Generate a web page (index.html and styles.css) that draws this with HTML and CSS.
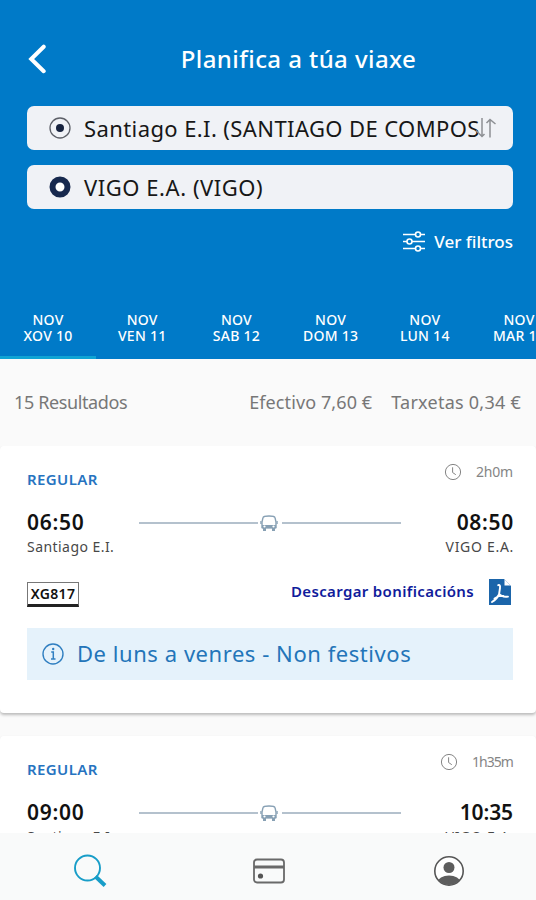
FILE: index.html
```html
<!DOCTYPE html>
<html lang="gl">
<head>
<meta charset="utf-8">
<meta name="viewport" content="width=device-width">
<title>Planifica a túa viaxe</title>
<link rel="stylesheet" href="styles.css">
</head>
<body>
<svg class="defs" width="0" height="0" aria-hidden="true">
  <symbol id="bus" viewBox="0 0 18 18">
    <path d="M3 3.7Q3.3 2 9 2T15 3.7L16 8V13.5H2V8Z" fill="#fff" stroke="currentColor" stroke-width="1.4"/>
    <path d="M2 11H16V14.5H2ZM3 14H6V17H3ZM12 14H15V17H12ZM.3 7H1.5V10H.3ZM16.5 7H17.7V10H16.5Z" fill="currentColor"/>
    <circle cx="4.5" cy="12.5" r="1.1" fill="#fff"/><circle cx="13.5" cy="12.5" r="1.1" fill="#fff"/>
  </symbol>
  <symbol id="clock" viewBox="0 0 18 18">
    <circle cx="9" cy="9" r="7.6" fill="none" stroke="currentColor"/>
    <path d="M8.6 4.3V9.5L11.8 11.7" fill="none" stroke="currentColor"/>
  </symbol>
</svg>
<div class="app">
  <header class="top">
    <div class="title-row">
      <svg class="back" width="18" height="30" viewBox="0 0 18 30"><path d="M15.7 2.7L3.2 15L15.7 27.2" fill="none" stroke="#fff" stroke-width="4" stroke-linecap="round" stroke-linejoin="miter"/></svg>
      <h1><span class="t-title">Planifica a túa viaxe</span></h1>
    </div>
    <div class="field">
      <svg width="24" height="24" viewBox="0 0 24 24"><circle cx="12" cy="12" r="10" fill="none" stroke="#5d6068" stroke-width="1.3"/><circle cx="12" cy="12" r="4" fill="#17233f"/></svg>
      <span class="t-from">Santiago E.I. (SANTIAGO DE COMPOS</span>
      <svg class="swap" width="22" height="20" viewBox="0 0 22 20"><path d="M7 0V18.5M1 12.5L7 18.5L9.5 16M15 19.5V1.5M11.5 5L15 1.5L20.5 6" fill="none" stroke="#8d9094" stroke-width="1.5"/></svg>
    </div>
    <div class="field">
      <svg width="24" height="24" viewBox="0 0 24 24"><circle cx="12" cy="12" r="7.5" fill="#fff" stroke="#17294e" stroke-width="6"/></svg>
      <span class="t-to">VIGO E.A. (VIGO)</span>
    </div>
    <div class="filters">
      <svg width="22" height="21" viewBox="0 0 22 21"><g fill="#007ac8" stroke="#fff" stroke-width="1.6"><path d="M0 3.5H22M0 10.5H22M0 17.5H22"/><circle cx="15" cy="3.5" r="2.5"/><circle cx="6.5" cy="10.5" r="2.5"/><circle cx="15" cy="17.5" r="2.5"/></g></svg>
      <span class="t-filter">Ver filtros</span>
    </div>
    <nav class="days">
      <div class="day active">NOV<br>XOV 10</div>
      <div class="day">NOV<br>VEN 11</div>
      <div class="day">NOV<br>SAB 12</div>
      <div class="day">NOV<br>DOM 13</div>
      <div class="day">NOV<br>LUN 14</div>
      <div class="day">NOV<br>MAR 15</div>
    </nav>
  </header>
  <div class="summary"><span class="t-count">15 Resultados</span><span class="prices"><span class="t-cash">Efectivo 7,60 €</span><span class="t-card">Tarxetas 0,34 €</span></span></div>
  <main class="list">
    <article class="card">
      <div class="card-head"><span class="kind">REGULAR</span><span class="duration"><svg width="18" height="18"><use href="#clock"/></svg><span class="t-dur">2h0m</span></span></div>
      <div class="trip">
        <b>06:50</b>
        <div class="route"><i></i><svg width="18" height="18"><use href="#bus"/></svg><i></i></div>
        <b class="end">08:50</b>
      </div>
      <div class="stops"><span class="t-stop">Santiago E.I.</span><span class="t-dest">VIGO E.A.</span></div>
      <div class="extras">
        <span class="line-code">XG817</span>
        <a class="download"><span class="t-down">Descargar bonificacións</span><svg width="22" height="26" viewBox="0 0 22 26"><path d="M0 0H15L22 7V26H0Z" fill="#1b65aa"/><path d="M15.5 .5V6.5H21.5Z" fill="#fff"/><path d="M9.2 6.2Q11.5 5.5 11 9T10 15.5Q8 20 3 23M10.2 15Q13 18.5 19 17.6M5.5 19.5L10 17L14.5 17" fill="none" stroke="#fff" stroke-width="1.9" stroke-linecap="round"/></svg></a>
      </div>
      <div class="notice"><svg width="22" height="22" viewBox="0 0 22 22"><circle cx="11" cy="11" r="10" fill="none" stroke="#307fc1" stroke-width="1.4"/><path d="M9.2 9H11.3V15.7M9 16H13.5" fill="none" stroke="#307fc1" stroke-width="1.5"/><circle cx="11.2" cy="6" r="1.2" fill="#307fc1"/></svg><span class="t-notice">De luns a venres - Non festivos</span></div>
    </article>
    <article class="card">
      <div class="card-head"><span class="kind">REGULAR</span><span class="duration"><svg width="18" height="18"><use href="#clock"/></svg><span class="t-dur2">1h35m</span></span></div>
      <div class="trip">
        <b>09:00</b>
        <div class="route"><i></i><svg width="18" height="18"><use href="#bus"/></svg><i></i></div>
        <b class="end narrow">10:35</b>
      </div>
      <div class="stops"><span class="t-stop">Santiago E.I.</span><span class="t-dest">VIGO E.A.</span></div>
    </article>
  </main>
  <footer class="tabs">
    <svg width="34" height="34" viewBox="0 0 34 34"><circle cx="14.5" cy="14" r="12.5" fill="none" stroke="#189dc8" stroke-width="1.9"/><path d="M22.5 22.5L32 31.5" stroke="#189dc8" stroke-width="4"/></svg>
    <svg width="34" height="34" viewBox="0 0 34 34"><rect x="2" y="5.5" width="30" height="23" rx="3" fill="none" stroke="#696969" stroke-width="1.8"/><path d="M2 13H32" stroke="#696969" stroke-width="3"/><circle cx="8.5" cy="22" r="2.6" fill="#555"/></svg>
    <svg width="34" height="34" viewBox="0 0 34 34"><clipPath id="c"><circle cx="17" cy="17" r="14"/></clipPath><circle cx="17" cy="17" r="14.2" fill="#fff" stroke="#555" stroke-width="1.6"/><circle cx="17" cy="13.5" r="5.5" fill="#5d5d5d"/><ellipse cx="17" cy="28" rx="11.3" ry="6.5" fill="#5d5d5d" clip-path="url(#c)"/></svg>
  </footer>
</div>
</body>
</html>
```
FILE: styles.css
```css
* { box-sizing: border-box; }
body { margin: 0; font-family: "Noto Sans", "Open Sans", sans-serif; background: #fafafa; }
svg { display: block; flex: none; }
.defs { position: absolute; }
.app { width: 536px; height: 900px; overflow: hidden; display: flex; flex-direction: column; }
span { white-space: nowrap; }

.top { height: 359px; flex: none; background: #007ac8; color: #fff; display: flex; flex-direction: column; }
.title-row { height: 106px; padding: 12px 28px 0; display: grid; grid-template-columns: 18px 1fr 18px; align-items: center; }
h1 { margin: 0 0 1px 61px; font-size: 24px; font-weight: 500; line-height: 30px; text-align: center; letter-spacing: .43px; }
.field { height: 44px; margin: 0 23px 15px 27px; padding: 0 15px 0 21px; border-radius: 7px; background: #f0f2f6; color: #171717; display: flex; align-items: center; font-size: 22px; line-height: 42px; }
.field span { margin-left: 12px; }
.t-from { letter-spacing: .4px; }
.t-to { letter-spacing: .55px; }
.swap { margin-left: -5px; }
.filters { height: 34px; margin-right: 23px; display: flex; justify-content: flex-end; align-items: center; gap: 9px; font-size: 17px; font-weight: 500; }
.days { margin-top: auto; height: 59px; display: flex; }
.day { width: 96px; flex: none; margin-right: -1.8px; padding-top: 12px; text-align: center; font-size: 14px; line-height: 16px; font-weight: 500; letter-spacing: .25px; border-bottom: 3px solid transparent; }
.active { border-color: #10a4d4; }

.summary { height: 87px; flex: none; padding: 0 15px 2px 14px; display: flex; align-items: center; justify-content: space-between; color: #777; font-size: 18px; }
.t-count { letter-spacing: -.38px; }
.t-cash { letter-spacing: .1px; }
.t-card { letter-spacing: .25px; }
.prices { display: flex; gap: 19px; }

.list { height: 387px; flex: none; overflow: hidden; }
.card { height: 267px; margin-bottom: 23px; padding: 16px 23px 0 27px; background: #fff; border-radius: 4px; box-shadow: 0 2px 3px #bbb; }
.card-head { height: 36px; display: flex; justify-content: space-between; }
.kind { padding-top: 7px; font-size: 15px; line-height: 20px; font-weight: 600; color: #2673c0; letter-spacing: .4px; }
.duration { height: 19px; display: flex; align-items: center; gap: 14px; color: #858585; font-size: 14px; }
.t-dur { letter-spacing: -.2px; }
.t-dur2 { letter-spacing: -.95px; }
.trip { height: 39px; padding-top: 10px; display: grid; grid-template-columns: 112px 262px 1fr; color: #111; font-size: 21px; line-height: 28px; }
.trip b { font-weight: 600; letter-spacing: .7px; }
.trip .end { text-align: right; margin-right: -1px; }
.trip .narrow { letter-spacing: -.1px; margin-right: 0; }
.route { height: 29px; display: flex; align-items: center; justify-content: space-between; color: #87a0b4; }
.route i { width: 119px; height: 2px; background: #b4c1cd; }
.route svg { margin-left: -2px; }
.stops { height: 23px; display: flex; justify-content: space-between; font-size: 14px; line-height: 20px; color: #484848; }
.t-stop { letter-spacing: .45px; }
.t-dest { letter-spacing: .7px; margin-right: -1px; }
.extras { height: 68px; display: flex; justify-content: space-between; align-items: center; padding-bottom: 4px; }
.line-code { height: 25px; width: 52px; margin-top: 4px; border: 1px solid #777; border-bottom: 3px solid #222; text-align: center; font-size: 14px; line-height: 22px; font-weight: 600; color: #111; letter-spacing: .35px; }
.download { display: flex; align-items: center; gap: 15px; margin-right: 2px; color: #101c9b; font-size: 15px; font-weight: 600; }
.t-down { letter-spacing: .35px; margin-top: -2px; }
.notice { height: 52px; padding-left: 15px; background: #e5f2fb; color: #2375b9; display: flex; align-items: center; gap: 13px; font-size: 22px; }
.t-notice { letter-spacing: .55px; margin-top: -2px; }

.tabs { height: 67px; flex: none; background: #f9fafa; display: grid; grid-template-columns: repeat(3, 179.5px); justify-items: center; align-items: center; padding-top: 8px; }
```
